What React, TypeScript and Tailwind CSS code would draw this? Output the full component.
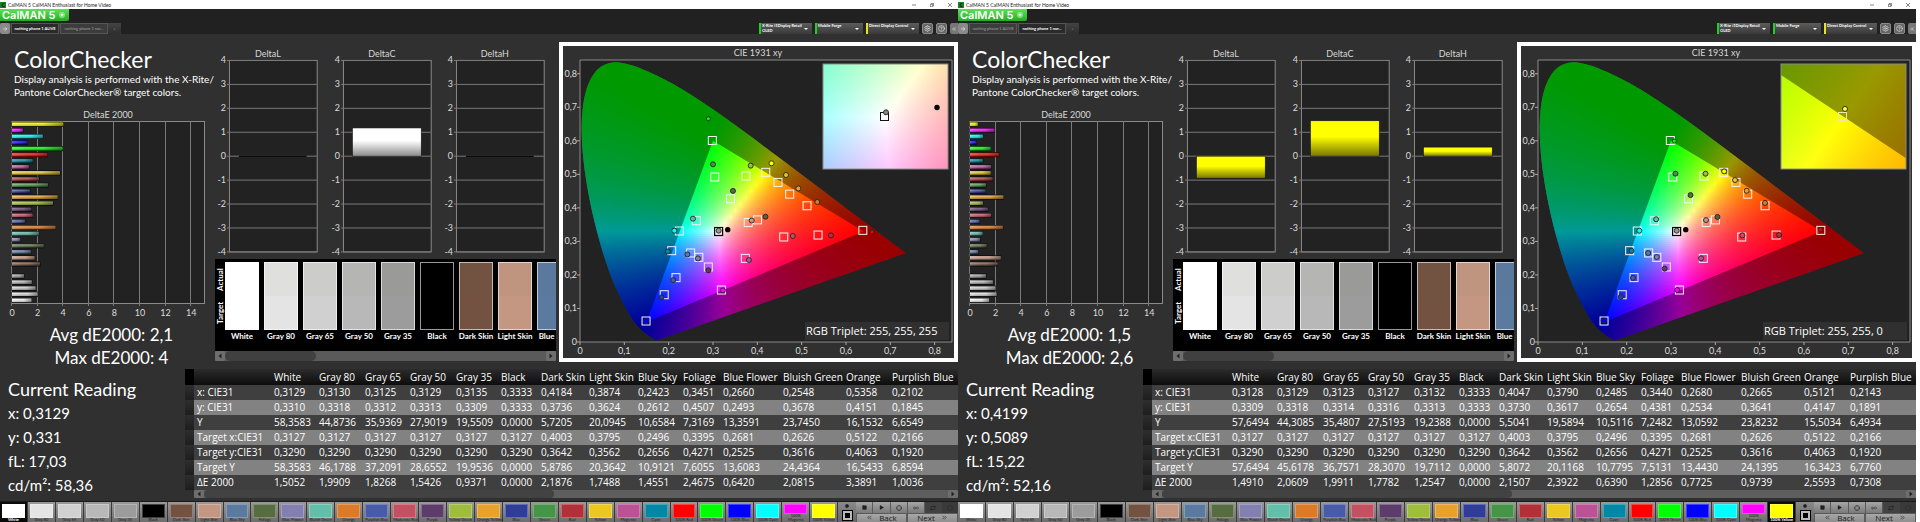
import { useId } from "react";
import { ArrowRight, Circle, CircleHelp, Crosshair, Infinity as Loop, Play, Settings, Square, Repeat, ChevronsLeft, ChevronsRight } from "lucide-react";

type Point = [number, number];

interface Patch {
  name: string;
  color: string;
  target?: Point;
}

interface Reading {
  tabActive: number;
  selected: number;
  rgb: string;
  inset: Point;
  insetLight: boolean;
  avg: string;
  max: string;
  current: string[];
  deltas: { value: number; fill: "white" | "yellow" }[];
  deltaE: number[];
  actual: (Point | null)[];
  table: string[][];
}

const patches: Patch[] = [
  { name: "White", color: "#ffffff" },
  { name: "Gray 80", color: "#e4e4e4" },
  { name: "Gray 65", color: "#d0d0d0" },
  { name: "Gray 50", color: "#b8b8b8" },
  { name: "Gray 35", color: "#9c9c9c" },
  { name: "Black", color: "#000000" },
  { name: "Dark Skin", color: "#735242", target: [0.4003, 0.3642] },
  { name: "Light Skin", color: "#c49782", target: [0.3795, 0.3562] },
  { name: "Blue Sky", color: "#5a7aa0", target: [0.2496, 0.2656] },
  { name: "Foliage", color: "#576c41", target: [0.3395, 0.4271] },
  { name: "Blue Flower", color: "#8280b0", target: [0.2681, 0.2525] },
  { name: "Bluish Green", color: "#62bfa9", target: [0.2626, 0.3616] },
  { name: "Orange", color: "#dc7a28", target: [0.5122, 0.4063] },
  { name: "Purplish Blue", color: "#475ba8", target: [0.2166, 0.192] },
  { name: "Moderate Red", color: "#c45162", target: [0.4596, 0.3132] },
  { name: "Purple", color: "#5d3c6b", target: [0.2895, 0.2237] },
  { name: "Yellow Green", color: "#9fbd3c", target: [0.3744, 0.495] },
  { name: "Orange Yellow", color: "#e8a22c", target: [0.473, 0.441] },
  { name: "Blue", color: "#2f3d98", target: [0.19, 0.141] },
  { name: "Green", color: "#459546", target: [0.304, 0.492] },
  { name: "Red", color: "#b23038", target: [0.537, 0.319] },
  { name: "Yellow", color: "#ebc81f", target: [0.4466, 0.476] },
  { name: "Magenta", color: "#bc5296", target: [0.373, 0.2495] },
  { name: "Cyan", color: "#0088a6", target: [0.2068, 0.2724] },
  { name: "100% Red", color: "#ff0000", target: [0.638, 0.333] },
  { name: "100% Green", color: "#00ff00", target: [0.2985, 0.601] },
  { name: "100% Blue", color: "#0000ff", target: [0.149, 0.0626] },
  { name: "100% Cyan", color: "#00ffff", target: [0.224, 0.331] },
  { name: "100% Magenta", color: "#ff00ff", target: [0.319, 0.155] },
  { name: "100% Yellow", color: "#ffff00", target: [0.419, 0.506] },
];

const rowLabels = ["x: CIE31", "y: CIE31", "Y", "Target x:CIE31", "Target y:CIE31", "Target Y", "ΔE 2000"];
const targetX = "0,3127 0,3127 0,3127 0,3127 0,3127 0,3127 0,4003 0,3795 0,2496 0,3395 0,2681 0,2626 0,5122 0,2166".split(" ");
const targetY = "0,3290 0,3290 0,3290 0,3290 0,3290 0,3290 0,3642 0,3562 0,2656 0,4271 0,2525 0,3616 0,4063 0,1920".split(" ");

const alive: Reading = {
  tabActive: 0,
  selected: 0,
  rgb: "255, 255, 255",
  inset: [0.3127, 0.329],
  insetLight: true,
  avg: "2,1",
  max: "4",
  current: ["x: 0,3129", "y: 0,331", "fL: 17,03", "cd/m²: 58,36"],
  deltas: [
    { value: 0, fill: "white" },
    { value: 1.18, fill: "white" },
    { value: 0, fill: "white" },
  ],
  deltaE: [1.51, 1.99, 1.83, 1.54, 0.94, 0, 2.19, 1.75, 1.46, 2.47, 0.64, 2.08, 3.39, 1.0, 1.6, 1.5, 3.2, 3.55, 1.4, 2.8, 2.1, 3.75, 1.3, 1.6, 2.75, 3.95, 1.2, 2.4, 0.85, 4],
  actual: [
    [0.3129, 0.331], null, null, null, null, null,
    [0.4184, 0.3736], [0.3874, 0.3624], [0.2423, 0.2612], [0.3451, 0.4507], [0.266, 0.2493], [0.2548, 0.3678],
    [0.5352, 0.4175], [0.2102, 0.1845], [0.48, 0.316], [0.2895, 0.2137], [0.385, 0.526], [0.4925, 0.458],
    [0.184, 0.133], [0.3, 0.53], [0.566, 0.318], [0.4647, 0.498], [0.381, 0.2445], [0.198, 0.27],
    [0.6586, 0.328], [0.2895, 0.666], [0.149, 0.062], [0.2128, 0.332], [0.3225, 0.154], [0.432, 0.533],
  ],
  table: [
    "0,3129 0,3130 0,3125 0,3129 0,3135 0,3333 0,4184 0,3874 0,2423 0,3451 0,2660 0,2548 0,5358 0,2102".split(" "),
    "0,3310 0,3318 0,3312 0,3313 0,3309 0,3333 0,3736 0,3624 0,2612 0,4507 0,2493 0,3678 0,4151 0,1845".split(" "),
    "58,3583 44,8736 35,9369 27,9019 19,5509 0,0000 5,7205 20,0945 10,6584 7,3169 13,3591 23,7450 16,1532 6,6549".split(" "),
    targetX,
    targetY,
    "58,3583 46,1788 37,2091 28,6552 19,9536 0,0000 5,8786 20,3642 10,9121 7,6055 13,6083 24,4364 16,5433 6,8594".split(" "),
    "1,5052 1,9909 1,8268 1,5426 0,9371 0,0000 2,1876 1,7488 1,4551 2,4675 0,6420 2,0815 3,3891 1,0036".split(" "),
  ],
};

const normal: Reading = {
  tabActive: 1,
  selected: 29,
  rgb: "255, 255, 0",
  inset: [0.4193, 0.5053],
  insetLight: false,
  avg: "1,5",
  max: "2,6",
  current: ["x: 0,4199", "y: 0,5089", "fL: 15,22", "cd/m²: 52,16"],
  deltas: [
    { value: -0.92, fill: "yellow" },
    { value: 1.48, fill: "yellow" },
    { value: 0.38, fill: "yellow" },
  ],
  deltaE: [1.49, 2.06, 1.99, 1.78, 1.25, 0, 2.15, 2.39, 0.64, 1.29, 0.77, 0.97, 2.56, 0.73, 1.65, 1.4, 1.0, 2.6, 1.2, 1.25, 1.75, 1.6, 1.65, 1.0, 2.25, 1.6, 0.5, 1.0, 1.9, 0.6],
  actual: [
    [0.3128, 0.331], null, null, null, null, null,
    [0.4047, 0.373], [0.379, 0.3637], [0.2485, 0.2654], [0.344, 0.4381], [0.268, 0.2534], [0.2665, 0.3661],
    [0.5121, 0.4147], [0.2143, 0.1911], [0.461, 0.318], [0.2857, 0.2187], [0.378, 0.502], [0.4707, 0.451],
    [0.1865, 0.134], [0.31, 0.502], [0.544, 0.319], [0.4444, 0.483], [0.3677, 0.2495], [0.211, 0.272],
    [0.637, 0.335], [0.3075, 0.5994], [0.148, 0.064], [0.2286, 0.332], [0.314, 0.155], [0.4199, 0.5089],
  ],
  table: [
    "0,3128 0,3129 0,3123 0,3127 0,3132 0,3333 0,4047 0,3790 0,2485 0,3440 0,2680 0,2665 0,5121 0,2143".split(" "),
    "0,3309 0,3318 0,3314 0,3316 0,3313 0,3333 0,3730 0,3617 0,2654 0,4381 0,2534 0,3641 0,4147 0,1891".split(" "),
    "57,6494 44,3085 35,4807 27,5193 19,2388 0,0000 5,5041 19,5894 10,5116 7,2482 13,0592 23,8232 15,5034 6,4934".split(" "),
    targetX,
    targetY,
    "57,6494 45,6178 36,7571 28,3070 19,7112 0,0000 5,8072 20,1168 10,7795 7,5131 13,4430 24,1395 16,3423 6,7760".split(" "),
    "1,4910 2,0609 1,9911 1,7782 1,2547 0,0000 2,1507 2,3922 0,6390 1,2856 0,7725 0,9739 2,5593 0,7308".split(" "),
  ],
};

/* ---------- colour maths ---------- */

const locus: Point[] = [
  [0.1741, 0.005], [0.1689, 0.0069], [0.1644, 0.0109], [0.1566, 0.0177], [0.144, 0.0297], [0.1355, 0.0399],
  [0.1241, 0.0578], [0.1096, 0.0868], [0.0913, 0.1327], [0.0687, 0.2007], [0.0454, 0.295], [0.0235, 0.4127],
  [0.0082, 0.5384], [0.0039, 0.6548], [0.0139, 0.7502], [0.0389, 0.812], [0.0743, 0.8338], [0.1142, 0.8262],
  [0.1547, 0.8059], [0.1929, 0.7816], [0.2296, 0.7543], [0.3016, 0.6923], [0.3731, 0.6245], [0.4441, 0.5547],
  [0.5125, 0.4866], [0.5752, 0.4242], [0.627, 0.3725], [0.6658, 0.334], [0.6915, 0.3083], [0.719, 0.2809],
  [0.7347, 0.2653],
];
const gamut: Point[] = [[0.64, 0.33], [0.3, 0.6], [0.15, 0.06]];

function xyColor(x: number, y: number) {
  const yy = Math.max(y, 0.001);
  const X = x / yy;
  const Z = (1 - x - yy) / yy;
  const lin = [
    3.2406 * X - 1.5372 - 0.4986 * Z,
    -0.9689 * X + 1.8758 + 0.0415 * Z,
    0.0557 * X - 0.204 + 1.057 * Z,
  ].map((v) => Math.max(v, 0));
  const top = Math.max(lin[0], lin[1], lin[2], 0.0001);
  const c = lin.map((v) => Math.round((255 * v) / top));
  return `rgb(${c[0]},${c[1]},${c[2]})`;
}

interface FieldProps {
  left: number;
  top: number;
  width: number;
  height: number;
  x: Point;
  y: Point;
}

function ColorField({ left, top, width, height, x, y }: FieldProps) {
  const id = useId().replace(/:/g, "");
  const rows = Math.ceil(height / 2);
  const stops = 64;
  return (
    <g shapeRendering="crispEdges">
      {Array.from({ length: rows }, (_, r) => {
        const yv = y[1] - ((r + 0.5) / rows) * (y[1] - y[0]);
        return (
          <g key={r}>
            <linearGradient id={`${id}r${r}`}>
              {Array.from({ length: stops + 1 }, (_, s) => (
                <stop key={s} offset={s / stops} stopColor={xyColor(x[0] + (s / stops) * (x[1] - x[0]), yv)} />
              ))}
            </linearGradient>
            <rect x={left} y={top + r * 2} width={width} height={2} fill={`url(#${id}r${r})`} />
          </g>
        );
      })}
    </g>
  );
}

function smoothPath(pts: Point[]) {
  let d = `M${pts[0][0]} ${pts[0][1]}`;
  for (let i = 0; i < pts.length - 1; i++) {
    const a = pts[Math.max(i - 1, 0)];
    const b = pts[i];
    const c = pts[i + 1];
    const e = pts[Math.min(i + 2, pts.length - 1)];
    d += `C${b[0] + (c[0] - a[0]) / 6} ${b[1] + (c[1] - a[1]) / 6} ${c[0] - (e[0] - b[0]) / 6} ${c[1] - (e[1] - b[1]) / 6} ${c[0]} ${c[1]}`;
  }
  return d + "Z";
}

/* ---------- charts ---------- */

const plot = { left: 17, top: 14, right: 389, bottom: 296 };
const px = (x: number) => plot.left + x * 443.3;
const py = (y: number) => plot.bottom - y * 335.3;
const polygon = (pts: Point[]) => "M" + pts.map((p) => p.join(" ")).join("L") + "Z";

function Chromaticity({ data }: { data: Reading }) {
  const id = useId().replace(/:/g, "");
  const shape = smoothPath(locus.map(([x, y]) => [px(x), py(y)] as Point));
  const tri = polygon(gamut.map(([x, y]) => [px(x), py(y)] as Point));
  const box = { left: 260, top: 18, width: 125, height: 105 };
  const ix = (x: number) => box.left + box.width / 2 + ((x - data.inset[0]) / 0.05) * box.width;
  const iy = (y: number) => box.top + box.height / 2 - ((y - data.inset[1]) / 0.05) * box.height;
  const insetTri = polygon(gamut.map(([x, y]) => [ix(x), iy(y)] as Point));
  const white = data.insetLight;
  const dot = data.actual[white ? 0 : 29] as Point;
  return (
    <svg viewBox="0 0 391 312" className="block w-full" role="img" aria-label="CIE 1931 xy chromaticity diagram">
      <clipPath id={`${id}l`}><path d={shape} /></clipPath>
      <clipPath id={`${id}i`}><rect x={box.left} y={box.top} width={box.width} height={box.height} /></clipPath>
      <text x="195" y="10" textAnchor="middle" className="fill-[#d8d8d8] font-[Lato] text-[9px]">CIE 1931 xy</text>
      <rect x={plot.left} y={plot.top} width={plot.right - plot.left} height={plot.bottom - plot.top} className="fill-[#222]" />
      <g clipPath={`url(#${id}l)`}>
        <ColorField left={plot.left} top={14} width={332} height={282} x={[0, 0.749]} y={[0, 0.841]} />
        <path d={`M0 0H391V312H0Z${tri}`} fillRule="evenodd" className="fill-black/40" />
      </g>
      <path d="M17 14H389V296H17Z" fill="none" className="stroke-[#8a8a8a]" />
      {[0, 1, 2, 3, 4, 5, 6, 7, 8].map((n) => (
        <g key={n} className="fill-[#dcdcdc] font-[Lato] text-[9px]">
          <path d={`M${plot.left - 3} ${py(n / 10)}h3M${px(n / 10)} ${plot.bottom}v3`} className="stroke-[#aaa]" />
          <text x="14" y={py(n / 10) + 3} textAnchor="end">{n ? `0,${n}` : "0"}</text>
          <text x={px(n / 10)} y="308" textAnchor="middle">{n ? `0,${n}` : "0"}</text>
        </g>
      ))}
      {patches.map((p) =>
        p.target ? (
          <rect key={p.name} x={px(p.target[0]) - 4} y={py(p.target[1]) - 4} width="8" height="8" fill="none" className="stroke-[#f4f4f4]" />
        ) : null,
      )}
      {data.actual.map((a, i) =>
        a && i > 0 ? (
          <circle key={i} cx={px(a[0])} cy={py(a[1])} r={i === 24 || i === 25 ? 2 : 2.5} fill={patches[i].color} className="stroke-[#222]" strokeWidth="0.9" />
        ) : null,
      )}
      <rect x={px(0.3127) - 4} y={py(0.331) - 3.5} width="8" height="8" fill="none" className="stroke-black" strokeWidth="1.2" />
      <circle cx={px(0.3129)} cy={py(0.332)} r="2.5" className="fill-[#999] stroke-[#222]" strokeWidth="0.9" />
      <circle cx={px(0.3333)} cy={py(0.335)} r="2.7" className="fill-black" />

      <g clipPath={`url(#${id}i)`}>
        <ColorField
          left={box.left}
          top={box.top}
          width={box.width}
          height={box.height}
          x={[data.inset[0] - 0.025, data.inset[0] + 0.025]}
          y={[data.inset[1] - 0.025, data.inset[1] + 0.025]}
        />
        <path d={`M0 0H391V312H0Z${insetTri}`} fillRule="evenodd" className="fill-black/40" />
      </g>
      <rect x={box.left} y={box.top} width={box.width} height={box.height} fill="none" className="stroke-[#8a8a8a]" />
      <rect x={box.left + box.width / 2 - 5} y={box.top + box.height / 2 - 4} width="8" height="8" fill="none" className={white ? "stroke-[#111]" : "stroke-[#e8e8b0]"} />
      <circle cx={ix(dot[0])} cy={iy(dot[1])} r="2.5" className={white ? "fill-[#888] stroke-[#222]" : "fill-[#ffff50] stroke-[#222]"} strokeWidth="0.9" />
      {white && <circle cx={ix(0.3333)} cy={iy(0.3333)} r="2.7" className="fill-black" />}

      <rect x="242" y="276" width="144" height="18" className="fill-[#303030]" />
      <text x="243" y="289" className="fill-white font-['Open_Sans'] text-[11px]">RGB Triplet: {data.rgb}</text>
    </svg>
  );
}

function DeltaPlot({ title, value, fill }: { title: string; value: number; fill: "white" | "yellow" }) {
  const id = useId().replace(/:/g, "");
  const y = (v: number) => 108.5 - v * 24;
  const top = Math.min(y(value), y(0));
  const height = Math.abs(value) * 24;
  return (
    <svg viewBox="0 0 114 210" className="block min-w-0 flex-1" role="img" aria-label={title}>
      <linearGradient id={id} x2="0" y2="1">
        <stop offset="0" stopColor={fill === "white" ? "#fff" : "#ff0"} />
        <stop offset="0.45" stopColor={fill === "white" ? "#fff" : "#ff0"} />
        <stop offset="1" stopColor={fill === "white" ? "#8a8a8a" : "#777700"} />
      </linearGradient>
      <text x="53" y="9" textAnchor="middle" className="fill-[#d8d8d8] font-[Lato] text-[9px]">{title}</text>
      <rect x="14.5" y="12.5" width="88" height="192" className="fill-[#222] stroke-[#8a8a8a]" />
      {[4, 3, 2, 1, 0, -1, -2, -3, -4].map((n) => (
        <g key={n}>
          <path d={`M12 ${y(n)}H102`} className="stroke-[#7a7a7a]" />
          <text x="11" y={y(n) + 3} textAnchor="end" className="fill-[#dcdcdc] font-[Lato] text-[9px]">{n}</text>
        </g>
      ))}
      {value === 0 ? (
        <path d="M24 108.5H92" className="stroke-[#0c0c0c]" strokeWidth="1.4" />
      ) : (
        <rect x="23.5" y={top} width="69" height={height} fill={`url(#${id})`} className="stroke-[#111]" strokeWidth="0.6" />
      )}
    </svg>
  );
}

function DeltaEPlot({ values }: { values: number[] }) {
  const id = useId().replace(/:/g, "");
  return (
    <svg viewBox="0 0 215 210" className="mt-2.5 block w-full" role="img" aria-label="DeltaE 2000">
      <linearGradient id={id} x2="0" y2="1">
        <stop offset="0" stopColor="#fff" stopOpacity="0.1" />
        <stop offset="0.35" stopColor="#fff" stopOpacity="0.3" />
        <stop offset="1" stopColor="#000" stopOpacity="0.25" />
      </linearGradient>
      <linearGradient id={`${id}e`}>
        <stop offset="0" stopColor="#fff" stopOpacity="0.15" />
        <stop offset="0.6" stopColor="#000" stopOpacity="0.05" />
        <stop offset="1" stopColor="#000" stopOpacity="0.4" />
      </linearGradient>
      <text x="108" y="9" textAnchor="middle" className="fill-[#d8d8d8] font-[Lato] text-[9px]">DeltaE 2000</text>
      <rect x="11.5" y="12.5" width="193" height="182" className="fill-[#222] stroke-[#8a8a8a]" />
      {[0, 2, 4, 6, 8, 10, 12, 14].map((n) => (
        <g key={n}>
          <path d={`M${Math.round(12 + n * 12.8) - 0.5} 12V197`} className="stroke-[#7a7a7a]" />
          <text x={12 + n * 12.8} y="207" textAnchor="middle" className="fill-[#dcdcdc] font-[Lato] text-[9px]">{n}</text>
        </g>
      ))}
      {values.map((v, i) => {
        if (!v) return null;
        const y = 189.5 - i * 6.07;
        const w = v * 12.8;
        return (
          <g key={patches[i].name}>
            <rect x="11.5" y={y - 0.6} width={w + 1} height="5" className="fill-[#0a0a0a]" />
            <rect x="12" y={y} width={w} height="3.6" fill={patches[i].color} />
            <rect x="12" y={y} width={w} height="3.6" fill={`url(#${id})`} />
            <rect x="12" y={y} width={w} height="3.6" fill={`url(#${id}e)`} />
          </g>
        );
      })}
    </svg>
  );
}

/* ---------- chrome ---------- */

function Arrow({ dir }: { dir: "left" | "right" }) {
  return (
    <button type="button" aria-label={`Scroll ${dir}`} className="flex w-2.5 shrink-0 items-center justify-center rounded-xs bg-[#6e6e6e]">
      <svg viewBox="0 0 6 6" className="size-1.5">
        <path d={dir === "left" ? "M4.5 0.5V5.5L1.5 3Z" : "M1.5 0.5V5.5L4.5 3Z"} className="fill-[#222]" />
      </svg>
    </button>
  );
}

function Picker({ label, sub, tone, width }: { label: string; sub?: string; tone: string; width: string }) {
  return (
    <button
      type="button"
      aria-haspopup="listbox"
      className={`flex h-[11px] shrink-0 items-start justify-between border-l-2 bg-linear-to-b from-[#5c5c5c] to-[#3a3a3a] pr-1 pl-px text-left font-[Lato] text-[4px] leading-[5px] font-bold text-white ${tone} ${width}`}
    >
      <span className="whitespace-nowrap">
        {label}
        {sub && <span className="block">{sub}</span>}
      </span>
      <svg viewBox="0 0 4 2" className="mt-[5px] h-0.5 w-1 shrink-0"><path d="M0 0H4L2 2Z" className="fill-white" /></svg>
    </button>
  );
}

function TitleBar() {
  return (
    <header className="flex h-[9px] shrink-0 items-center bg-white pr-1.5 font-[Lato] text-[5px] text-[#222]">
      <svg viewBox="0 0 8 8" className="h-2 w-1.5"><path d="M0 0H8V8H0Z" className="fill-[#0f8a1c]" /><path d="M6 2.5A2 2 0 1 0 6 5.6" fill="none" className="stroke-[#072a0a]" strokeWidth="1.4" /></svg>
      <span className="ml-0.5 leading-2 whitespace-nowrap">CalMAN 5 CalMAN Enthusiast for Home Video</span>
      <div className="ml-auto flex items-center gap-3.5">
        <button type="button" aria-label="Minimize"><svg viewBox="0 0 4 4" className="size-1"><path d="M0 2H4" className="stroke-[#333]" strokeWidth="0.6" /></svg></button>
        <button type="button" aria-label="Restore"><svg viewBox="0 0 4 4" className="size-1"><path d="M0.3 1.3H2.7V3.7H0.3ZM1.3 1V0.3H3.7V2.7H3" fill="none" className="stroke-[#333]" strokeWidth="0.6" /></svg></button>
        <button type="button" aria-label="Close"><svg viewBox="0 0 4 4" className="size-1"><path d="M0 0L4 4M4 0L0 4" className="stroke-[#333]" strokeWidth="0.6" /></svg></button>
      </div>
    </header>
  );
}

function Toolbar({ active }: { active: number }) {
  const tool = "flex size-[11px] items-center justify-center rounded-xs border border-[#8a8a8a] bg-[#666] text-[#eee]";
  return (
    <div className="flex h-[25px] shrink-0 items-end justify-between bg-[#212121]">
      <div className="flex h-full flex-col justify-between">
        <button type="button" className="flex h-3 w-[69px] items-center justify-between rounded-br-xs bg-linear-to-b from-[#5fe05a] to-[#1fae1d] pr-1 pl-0.5 font-[Inter] text-[11px] leading-3 font-semibold whitespace-nowrap text-white">
          <span>CalMAN 5</span>
          <svg viewBox="0 0 6 6" className="size-1.5 shrink-0"><circle cx="3" cy="3" r="3" className="fill-white/40" /><path d="M1.5 2.2H4.5L3 4.2Z" className="fill-white" /></svg>
        </button>
        <div role="tablist" className="flex h-[11px] w-[121px] items-stretch bg-linear-to-b from-[#444] to-[#2e2e2e] font-[Lato] text-[4px] leading-[9px]">
          <button type="button" aria-label="Back to start" className="flex w-2.5 items-center justify-center rounded-xs bg-[#8a8a8a] text-white"><ArrowRight size={6} /></button>
          {["nothing phone 1 ALIVE", "nothing phone 1 nor..."].map((t, i) => (
            <button key={t} type="button" role="tab" aria-selected={i === active} className={`ml-px w-[48px] border border-[#555] font-bold whitespace-nowrap ${i === active ? "bg-[#2a2a2a] text-white" : "bg-[#3c3c3c] text-[#8a8a8a]"}`}>
              {t}
            </button>
          ))}
          <button type="button" aria-label="Add tab" className="flex-1 text-[#888]">+</button>
        </div>
      </div>
      <div className="flex items-center gap-[3px]">
        <Picker label="X-Rite i1Display Retail" sub="OLED" tone="border-[#1fd01f]" width="w-[53px]" />
        <Picker label="Mobile Forge" tone="border-[#1fd01f]" width="w-[48px]" />
        <Picker label="Direct Display Control" tone="border-[#e8e020]" width="w-[53px]" />
        <div className="flex gap-[3px]">
          <button type="button" aria-label="Settings" className={tool}><Settings size={7} /></button>
          <button type="button" aria-label="Help" className={tool}><CircleHelp size={7} /></button>
          <button type="button" aria-label="Collapse" className="flex h-[11px] w-2 items-center justify-center rounded-l-xs bg-[#777] text-white"><ChevronsLeft size={6} /></button>
        </div>
      </div>
    </div>
  );
}

function SwatchStrip() {
  return (
    <div className="mt-0.5">
      <div className="flex h-[92px] overflow-hidden bg-black pt-[3px]">
        <div className="flex h-[68px] w-2.5 shrink-0 rotate-180 items-center justify-around font-[Lato] text-[8px] leading-2.5 font-bold text-white [writing-mode:vertical-rl]">
          <span>Target</span>
          <span>Actual</span>
        </div>
        {patches.slice(0, 9).map((p, i) => (
          <figure key={p.name} className="flex w-[39px] shrink-0 flex-col pr-[5px]">
            <div className="h-[68px] border border-white/60" style={{ backgroundColor: p.color }}>
              <div className={i === 0 || i === 5 ? "h-1/2" : "h-1/2 bg-[#586040]/3"} />
            </div>
            <figcaption className="flex justify-center font-[Lato] text-[8px] leading-3 font-bold whitespace-nowrap text-white">{p.name}</figcaption>
          </figure>
        ))}
      </div>
      <div className="flex h-2.5 bg-[#5a5a5a]">
        <Arrow dir="left" />
        <div className="w-[91px] rounded-full bg-[#404040]" />
        <div className="flex-1" />
        <Arrow dir="right" />
      </div>
    </div>
  );
}

const columns = ["w-[9px]", "w-[78px]", "w-[45px]", "w-[46px]", "w-[45px]", "w-[46px]", "w-[45px]", "w-[40px]", "w-[48px]", "w-[49px]", "w-[45px]", "w-[40px]", "w-[60px]", "w-[63px]", "w-[46px]", "w-[68px]"];

function ReadingTable({ rows }: { rows: string[][] }) {
  return (
    <div className="min-w-0 flex-1 overflow-hidden">
      <table className="w-[773px] table-fixed border-collapse text-left font-['Open_Sans'] text-[10px] whitespace-nowrap text-white">
        <colgroup>{columns.map((c, i) => <col key={i} className={c} />)}</colgroup>
        <thead>
          <tr className="h-4 bg-linear-to-b from-[#2c2c2c] to-[#0d0d0d] leading-4">
            <td className="bg-black p-0" />
            <td className="p-0" />
            {patches.slice(0, 14).map((p) => (
              <th key={p.name} scope="col" className="p-0 pl-0.5 font-medium">{p.name}</th>
            ))}
          </tr>
        </thead>
        <tbody>
          {rows.map((r, i) => (
            <tr key={rowLabels[i]} className={`h-[15px] leading-[15px] ${i % 2 ? "bg-[#828282]" : "bg-[#3f3f3f]"}`}>
              <td className="bg-linear-to-b from-[#2e2e2e] to-[#1e1e1e] p-0" />
              <th scope="row" className="p-0 pl-[3px] font-normal">{rowLabels[i]}</th>
              {r.map((v, j) => <td key={j} className="p-0 pl-0.5">{v}</td>)}
            </tr>
          ))}
        </tbody>
      </table>
      <div className="ml-[9px] flex h-2 bg-[#5e5e5e]">
        <Arrow dir="left" />
        <div className="w-[350px] rounded-full bg-[#424242]" />
        <div className="flex-1" />
        <Arrow dir="right" />
      </div>
    </div>
  );
}

function BottomBar({ selected }: { selected: number }) {
  const key = "flex flex-1 items-center justify-center border-r border-[#5a5a5a] bg-linear-to-b from-[#a5a5a5] to-[#7a7a7a] text-[#222]";
  return (
    <footer className="flex h-7 shrink-0 border-t border-[#1a1a1a] bg-[#6a6a6a]">
      <div className="flex w-[838px] shrink-0">
        {patches.map((p, i) => (
          <button
            key={p.name}
            type="button"
            className={`flex min-w-0 flex-1 flex-col border-r border-[#3a3a3a] px-0.5 pt-0.5 text-center font-[Lato] text-[4px] leading-1 ${i === selected ? "bg-[#0a0a0a] font-bold text-white" : "bg-linear-to-b from-[#9a9a9a] to-[#5e5e5e] text-[#1c1c1c]"}`}
          >
            <span className={`block w-full shrink-0 border border-white/25 ${i === 28 ? "h-2.5" : "h-3.5"}`} style={{ backgroundColor: p.color }} />
            <span className={`w-full ${i === 28 ? "" : "whitespace-nowrap"}`}>{p.name}</span>
          </button>
        ))}
      </div>
      <div className="flex w-[18px] shrink-0 flex-col items-center bg-linear-to-b from-[#8a8a8a] to-[#5a5a5a]">
        <button type="button" aria-label="Expand" className="flex h-2 items-center text-[#222]"><Circle size={4} fill="currentColor" /></button>
        <button type="button" aria-label="Pattern window" className="flex size-[11px] items-center justify-center border border-black bg-[#bbb]"><span className="size-[5px] bg-black" /></button>
      </div>
      <div className="min-w-0 flex-1">
        <div className="flex h-[11px] items-stretch">
          <button type="button" aria-label="Stop" className={key}><Square size={5} fill="currentColor" /></button>
          <button type="button" aria-label="Read" className={key}><Play size={5} fill="currentColor" /></button>
          <button type="button" aria-label="Read series" className={key}><Crosshair size={6} /></button>
          <button type="button" aria-label="Read continuous" className={key}><Loop size={6} /></button>
          <button type="button" aria-label="Loop" className="flex flex-1 items-center justify-center bg-[#424242] text-[#1a1a1a]"><Repeat size={6} /></button>
          <button type="button" aria-label="Record" className="flex flex-1 items-center justify-center bg-[#3a3a3a] text-[#2a2a2a]"><Circle size={6} /></button>
        </div>
        <div className="flex h-4 font-['Open_Sans'] text-[8px] leading-2 text-[#1a1a1a]">
          <button type="button" className="flex flex-1 items-start justify-center gap-1.5 border border-[#5a5a5a] bg-linear-to-b from-[#a8a8a8] to-[#7a7a7a]"><ChevronsLeft size={7} />Back</button>
          <button type="button" className="flex flex-1 items-start justify-center gap-1.5 border border-[#5a5a5a] bg-linear-to-b from-[#a8a8a8] to-[#7a7a7a]">Next<ChevronsRight size={7} /></button>
        </div>
      </div>
    </footer>
  );
}

function Workspace({ data }: { data: Reading }) {
  return (
    <section className="flex min-w-0 flex-col overflow-hidden bg-[#303030]">
      <TitleBar />
      <Toolbar active={data.tabActive} />
      <div className="flex shrink-0">
        <div className="w-[215px] shrink-0 pt-3 text-white">
          <h1 className="pl-3.5 font-[Lato] text-[23px] leading-[26px]">ColorChecker</h1>
          <p className="mt-px pl-3.5 font-[Lato] text-[10px] leading-[13px] whitespace-nowrap">
            Display analysis is performed with the X-Rite/
            <br />
            Pantone ColorChecker® target colors.
          </p>
          <DeltaEPlot values={data.deltaE} />
          <div className="mt-1 pl-2 text-center font-[Lato] text-[17px] leading-[23px]">
            <p>Avg dE2000: {data.avg}</p>
            <p>Max dE2000: {data.max}</p>
          </div>
        </div>
        <div className="w-[341px] shrink-0 pt-3.5">
          <div className="flex">
            <DeltaPlot title="DeltaL" {...data.deltas[0]} />
            <DeltaPlot title="DeltaC" {...data.deltas[1]} />
            <DeltaPlot title="DeltaH" {...data.deltas[2]} />
          </div>
          <SwatchStrip />
        </div>
        <div className="ml-[3px] min-w-0 flex-1 pt-2">
          <div className="border-4 border-white bg-[#303030]">
            <Chromaticity data={data} />
          </div>
        </div>
      </div>
      <div className="flex shrink-0 pb-[3px]">
        <div className="w-[185px] shrink-0 pt-2 pl-2 font-[Lato] text-[15px] leading-6 text-white">
          <h2 className="text-[18px] leading-6">Current Reading</h2>
          {data.current.map((c) => <p key={c}>{c}</p>)}
        </div>
        <ReadingTable rows={data.table} />
      </div>
      <BottomBar selected={data.selected} />
    </section>
  );
}

export default function App() {
  return (
    <main className="grid h-screen grid-cols-2 overflow-hidden bg-white pr-1">
      <Workspace data={alive} />
      <Workspace data={normal} />
    </main>
  );
}
